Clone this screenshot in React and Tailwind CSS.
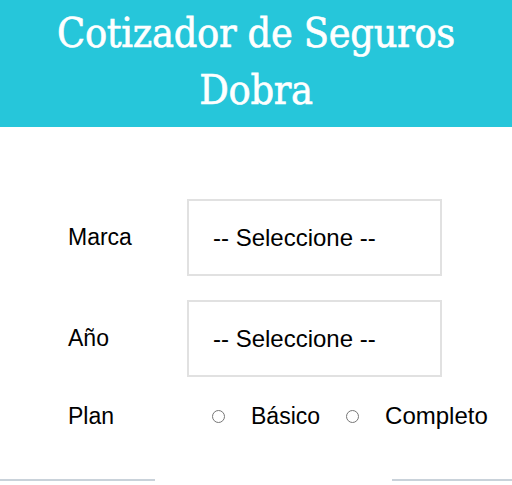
import React from 'react';

const Campo = ({ label, children }) => (
  <div className="flex items-center">
    <label className="w-[119px] text-[23px] text-black">{label}</label>
    {children}
  </div>
);

const Selector = () => (
  <select className="appearance-none w-[255px] h-[77px] border-2 border-[#e1e1e1] bg-white pl-[24px] text-[24px] text-black outline-none">
    <option>-- Seleccione --</option>
  </select>
);

export default function App() {
  return (
    <div className="w-[512px] h-[485px] bg-white overflow-hidden flex flex-col" style={{ fontFamily: '"Liberation Sans", Arial, sans-serif' }}>
      <header className="bg-[#26c6da] h-[127px] shrink-0 flex items-center justify-center">
        <h1
          className="text-white text-center text-[41px] font-normal leading-[57px] pb-[4px] tracking-[-0.3px]"
          style={{ fontFamily: '"DejaVu Serif Condensed", "DejaVu Serif", serif', WebkitTextStroke: '0.6px white' }}
        >
          Cotizador de Seguros
          <br />
          Dobra
        </h1>
      </header>

      <form className="pl-[68px] pt-[72px] flex flex-col">
        <Campo label="Marca">
          <Selector />
        </Campo>
        <div className="h-[24px]" />
        <Campo label="Año">
          <Selector />
        </Campo>
        <div className="flex items-center mt-[21px]">
          <span className="w-[144px] text-[23px] text-black">Plan</span>
          <input type="radio" name="plan" className="w-[13px] h-[13px] m-0" />
          <span className="ml-[26px] text-[23px] text-black">Básico</span>
          <input type="radio" name="plan" className="w-[13px] h-[13px] m-0 ml-[26px]" />
          <span className="ml-[26px] text-[24px] text-black">Completo</span>
        </div>
      </form>

      <div className="flex-1" />
      <div className="mb-[4px] flex justify-between">
        <div className="w-[155px] h-[2px] bg-[#c9d2da]" />
        <div className="w-[120px] h-[2px] bg-[#c9d2da]" />
      </div>
    </div>
  );
}
